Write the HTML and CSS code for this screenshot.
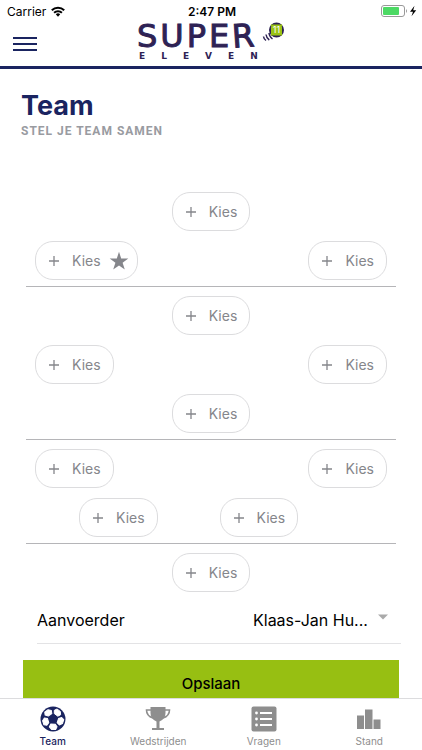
FILE: index.html
```html
<!DOCTYPE html>
<html lang="nl">
<head>
<meta charset="utf-8">
<meta name="viewport" content="width=device-width, initial-scale=1">
<title>Team</title>
<link rel="stylesheet" href="styles.css">
</head>
<body>
<div class="app">
  <header class="top">
    <div class="status">
      <div class="status-left">
        <span>Carrier</span>
        <svg width="14" height="11" viewBox="0 0 14 11" aria-hidden="true"><g fill="none" stroke="#000" stroke-width="2"><path d="M.8 4.3a8.8 8.8 0 0 1 12.4 0"/><path d="M3.1 6.8a5.5 5.5 0 0 1 7.8 0"/></g><path d="M4.8 8.3a3.1 3.1 0 0 1 4.4 0L7 10.7z"/></svg>
      </div>
      <span class="time">2:47 PM</span>
      <div class="status-right">
        <svg width="36" height="12" viewBox="0 0 36 12" aria-hidden="true"><rect x=".5" y=".5" width="23" height="11" rx="2.5" fill="#fff" stroke="#999"/><rect x="2" y="2" width="16" height="8" rx="1" fill="#4cd964"/><path d="M25 4q2 2 0 4z" fill="#999"/><path d="M33.500.8 29 6.700h3L30.500 11.300 35.200 5.300h-3z"/></svg>
      </div>
    </div>
    <div class="brand-bar">
      <button class="menu" type="button" aria-label="Menu"><svg width="24" height="16" viewBox="0 0 24 16"><path d="M0 2h24M0 8h24M0 14h24" stroke="#1a2460" stroke-width="2"/></svg></button>
      <div class="brand">
        <div class="wordmark"><span class="super">SUPE<span class="tilt">R</span></span><span class="eleven">ELEVEN</span></div>
        <svg class="ball" width="24" height="24" viewBox="0 0 24 24"><circle cx="15.500" cy="8" r="7.500" fill="#2e2254"/><path d="M12 2.500h7l2 2v7l-2 2h-7l-2-2v-7z" fill="#9ac414"/><path d="m10.200 2.700 2 2M20.800 2.700l-2 2M10.200 13.300l2-2M20.800 13.300l-2-2" stroke="#9ac414" stroke-width="1.800"/><g fill="none" stroke="#2e2254" stroke-width="1.500"><path d="M8 11q.500 4 3.500 6M5 12.500q.500 3.800 3.300 5.500M2.500 14.500q.300 2.500 2.500 4"/></g><text class="ball-number" x="15.500" y="11" text-anchor="middle">11</text></svg>
      </div>
    </div>
  </header>

  <main class="content">
    <h1>Team</h1>
    <p class="subtitle">STEL JE TEAM SAMEN</p>
    <svg class="symbols" aria-hidden="true"><symbol id="plus" viewBox="0 0 12 12"><path d="M6 1v10M1 6h10" stroke="currentColor" stroke-width="1.300"/></symbol></svg>

    <div class="field">
      <div class="line">
        <div class="row center"><button class="pick" type="button"><svg><use href="#plus"/></svg>Kies</button></div>
        <div class="row"><button class="pick" type="button"><svg><use href="#plus"/></svg>Kies<svg class="star" viewBox="0 0 20 20"><path fill="currentColor" d="m10 .8 2.200 6.700h7.100l-5.700 4.200 2.200 6.900L10 14.400l-5.800 4.200 2.200-6.900L.7 7.500h7.100z"/></svg></button><button class="pick" type="button"><svg><use href="#plus"/></svg>Kies</button></div>
      </div>
      <div class="line">
        <div class="row center"><button class="pick" type="button"><svg><use href="#plus"/></svg>Kies</button></div>
        <div class="row"><button class="pick" type="button"><svg><use href="#plus"/></svg>Kies</button><button class="pick" type="button"><svg><use href="#plus"/></svg>Kies</button></div>
        <div class="row center"><button class="pick" type="button"><svg><use href="#plus"/></svg>Kies</button></div>
      </div>
      <div class="line">
        <div class="row"><button class="pick" type="button"><svg><use href="#plus"/></svg>Kies</button><button class="pick" type="button"><svg><use href="#plus"/></svg>Kies</button></div>
        <div class="row inner"><button class="pick" type="button"><svg><use href="#plus"/></svg>Kies</button><button class="pick" type="button"><svg><use href="#plus"/></svg>Kies</button></div>
      </div>
      <div class="line">
        <div class="row center"><button class="pick" type="button"><svg><use href="#plus"/></svg>Kies</button></div>
      </div>
    </div>

    <div class="captain">
      <label for="captain">Aanvoerder</label>
      <div class="select">
        <select id="captain"><option>Klaas-Jan Hu...</option></select>
        <svg width="10" height="12" viewBox="0 0 10 12" aria-hidden="true"><path d="M0 .5h10L5 5.500z" fill="#aaa"/></svg>
      </div>
    </div>
    <button class="save" type="button">Opslaan</button>
  </main>

  <nav class="tabs">
    <a class="tab active" href="#team"><svg viewBox="0 0 26 26"><circle cx="13" cy="13" r="12.500" fill="currentColor"/><g fill="#fff" stroke="#fff" stroke-linejoin="round"><path id="patch" d="M14.300 4.300 17 3 20.300 5.400 20.600 8.800 17.800 10.200 14.300 7.600z"/><use href="#patch" transform="rotate(72 13 13)"/><use href="#patch" transform="rotate(144 13 13)"/><use href="#patch" transform="rotate(216 13 13)"/><use href="#patch" transform="rotate(288 13 13)"/></g></svg>Team</a>
    <a class="tab" href="#wedstrijden"><svg viewBox="0 0 26 26"><path fill="currentColor" d="M5.500 1h15v6q0 6-6 8.500v6.500h4.500v2H7v-2h4.500v-6.500q-6-2.500-6-8.500z"/><path d="M6 4H1.500q0 6 6.500 8M20 4h4.500q0 6-6.500 8" fill="none" stroke="currentColor" stroke-width="1.600"/></svg>Wedstrijden</a>
    <a class="tab" href="#vragen"><svg viewBox="0 0 26 26"><rect x=".5" y=".5" width="25" height="25" rx="2" fill="currentColor"/><path d="M9 7h12M9 13h12M9 19h12" stroke="#fff" stroke-width="2"/><g fill="#fff"><circle cx="5.500" cy="7" r="1.400"/><circle cx="5.500" cy="13" r="1.400"/><circle cx="5.500" cy="19" r="1.400"/></g></svg>Vragen</a>
    <a class="tab" href="#stand"><svg viewBox="0 0 26 26"><path fill="currentColor" d="M1 9.500h7V23H1zM9 3.500h7.500V23H9zM17.500 13.500h7V23h-7z"/></svg>Stand</a>
  </nav>
</div>
</body>
</html>
```
FILE: styles.css
```css
* { box-sizing: border-box; }
body { margin: 0; background: #fff; color: #000; font-family: Inter, "Liberation Sans", sans-serif; }
button, select { font: inherit; color: inherit; margin: 0; padding: 0; border: 0; background: none; appearance: none; }
svg { display: block; flex: none; }
.app { display: flex; flex-direction: column; height: 100vh; }

.top { border-bottom: 3px solid #1a2460; }
.status { display: grid; grid-template-columns: 1fr auto 1fr; align-items: center; height: 22px; padding: 0 5px 0 7px; font-size: 12px; }
.status-left { display: flex; align-items: center; gap: 5px; }
.status-right { display: flex; justify-content: flex-end; }
.time { font-weight: 600; }
.brand-bar { display: grid; grid-template-columns: 1fr auto 1fr; height: 44px; padding: 0 13px; }
.menu { justify-self: start; align-self: center; cursor: pointer; }
.brand { display: flex; gap: 2px; }
.wordmark { display: flex; flex-direction: column; width: 122px; color: #2e2254; font-family: "DejaVu Sans", sans-serif; white-space: nowrap; }
.super { font-size: 32px; line-height: 28px; letter-spacing: 3px; -webkit-text-stroke: 1px #2e2254; }
.tilt { display: inline-block; transform: rotate(-4deg); }
.eleven { padding-left: 2px; font-size: 9px; font-weight: 700; line-height: 13px; letter-spacing: 16px; }
.ball-number { font-size: 9px; fill: #fff; }

.content { flex: 1; min-height: 0; overflow-y: auto; scrollbar-width: none; padding: 20px 21px 0; }
h1 { margin: 0; color: #1a2460; font-size: 27px; font-weight: 700; line-height: 34px; }
.subtitle { margin: 0; color: #999ba1; font-family: Roboto, sans-serif; font-size: 12px; font-weight: 700; line-height: 16px; letter-spacing: 1px; }
.symbols { width: 0; height: 0; }

.field { margin: 44px 5px 0; }
.line { display: flex; flex-direction: column; gap: 10px; padding: 9px 9px 6px; border-bottom: 1px solid #b5b5b8; }
.line:last-child { padding-bottom: 5px; border: 0; }
.row { display: flex; justify-content: space-between; }
.row.center { justify-content: center; }
.row.inner { justify-content: flex-start; gap: 62px; padding-left: 12.5%; }
.pick { display: flex; align-items: center; height: 39px; padding: 0 12px; border: 1px solid #dcdcde; border-radius: 18px; color: #85868b; font-size: 14px; cursor: pointer; }
.pick svg { width: 12px; height: 12px; margin-right: 12px; }
.pick .star { width: 20px; height: 20px; margin: 0 -4px 0 8px; }

.captain { display: flex; justify-content: space-between; align-items: center; height: 47px; margin: 0 0 0 16px; border-bottom: 1px solid #e3e3e5; font-size: 16px; }
.select { display: flex; align-items: center; gap: 10px; padding-right: 13px; }
.save { display: block; width: calc(100% - 4px); height: 46px; margin: 16px 2px; background: #97bf12; font-size: 15px; font-weight: 500; cursor: pointer; }

.tabs { display: grid; grid-template-columns: repeat(4, 1fr); height: 52px; border-top: 1px solid #dcdcde; background: #fff; }
.tab { display: flex; flex-direction: column; align-items: center; gap: 2px; padding-top: 7px; color: #8e8e8e; font-size: 10px; line-height: 14px; text-decoration: none; }
.tab svg { width: 26px; height: 26px; }
.tab.active { color: #1a2460; font-weight: 500; }
```
